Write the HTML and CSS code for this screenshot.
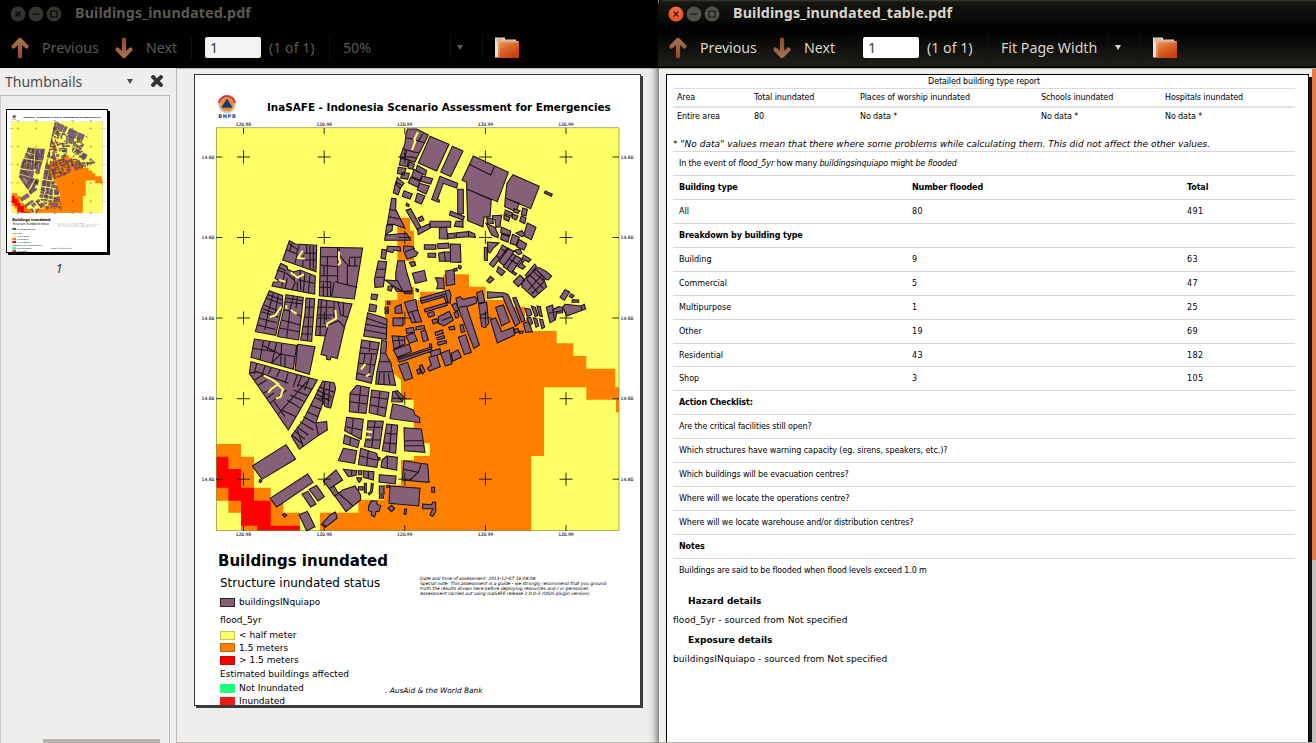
FILE: index.html
```html
<!DOCTYPE html>
<html lang="en">
<head>
<meta charset="utf-8">
<title>Buildings_inundated_table.pdf</title>
<link rel="stylesheet" href="styles.css">
</head>
<body>
<svg class="defs" width="0" height="0" aria-hidden="true">
  <defs>
    <linearGradient id="arrowFill" x1="0" y1="0" x2="0" y2="1"><stop offset="0" stop-color="#a3714f"/><stop offset="1" stop-color="#96492b"/></linearGradient>
    <linearGradient id="folderFill" x1="0" y1="0" x2=".6" y2="1"><stop offset="0" stop-color="#e6a566"/><stop offset=".5" stop-color="#d9682a"/><stop offset="1" stop-color="#cc3d0e"/></linearGradient>
    <symbol id="arrow" viewBox="0 0 18 22"><path d="M9 3V19.500M2.500 9.500 9 3 15.500 9.500" fill="none" stroke="url(#arrowFill)" stroke-width="4.200" stroke-linecap="round" stroke-linejoin="round"/></symbol>
    <symbol id="folder" viewBox="0 0 24 22"><path d="M0 0.500H10V2.500H21V20.500H0Z" fill="#e4e0dd"/><path d="M1.500 2.200H8.500M1.500 4H19" stroke="#d08868" stroke-width=".8"/><path d="M3 4H24V21H3Z" fill="url(#folderFill)"/><path d="M4 20V5H23" fill="none" stroke="#f0b488" stroke-width=".9"/></symbol>
    <symbol id="logo" viewBox="0 0 20 24">
      <circle cx="10" cy="9.500" r="8.800" fill="#cfc3c6"/><path d="M2 8A8.100 8.100 0 0 1 18 8" fill="none" stroke="#d33a3a" stroke-width="2.200"/>
      <circle cx="10" cy="9.700" r="6.600" fill="#f08a18"/><path d="M10 3.600 15.600 12.800H4.400Z" fill="#0c3b7c"/>
      <text x="1.200" y="23" textLength="17.600" font-family="DejaVu Sans" font-weight="bold" font-size="5" fill="#174a87">BNPB</text>
    </symbol>
    <symbol id="map" viewBox="200 119 435 420">
      <rect x="216.300" y="127.800" width="402.700" height="402.800" fill="#ffff66"/>
      <g transform="translate(370 270) scale(.33333)">
        <path fill="#ff8000" d="M45 90H82V50H132V90H150V65H220V13H297V50H347V90H425V110H465V150H485V183H560V220H610V258H649V296H736V352H747V427H738V389H649V352H522V558H484V782H-150V728H-35V690H42V645H93V570H132V558H180V520H131V390H93V330L70 310V290H57V260H45Z"/>
        <path fill="#ff8000" d="M82-157H120V-118H132V-28H82Z"/>
      </g>
      <g transform="translate(210 380) scale(.33333)">
        <path fill="#ff8000" d="M19 192H93V230H132V323H182V362H220V398H270V452H93V398H55V362H19Z"/>
        <path fill="#f00" d="M19 230H55V267H93V323H132V362H182V437H270V452H142V437H93V362H55V323H19Z"/>
      </g>
      <rect x="216.300" y="127.800" width="402.700" height="402.800" fill="none" stroke="#77772c" stroke-width=".6"/>
      <g stroke="#1c1c08" stroke-width=".9" fill="none">
        <path d="M243.500 128v6M324.200 128v6M404.800 128v6M485.400 128v6M566 128v6M243.500 531v-6M324.200 531v-6M404.800 531v-6M485.400 531v-6M566 531v-6"/>
        <path d="M216 157h6.500M216 237.500h6.500M216 318h6.500M216 398.700h6.500M216 479.200h6.500M619 157h-6.500M619 237.500h-6.500M619 318h-6.500M619 398.700h-6.500M619 479.200h-6.500"/>
      </g>
      <g class="bld" transform="translate(380 120) scale(.33333)">
        <path d="M83 27L110 27 145 45 104 127 60 112 75 70 78 40ZM75 54L100 57M104 60L135 68M100 95L66 86M96 95L118 98M90 110L110 115M80 90L74 115M128 42l-14 24"/>
        <path class="gap" d="M114 36L103 58 106 64 96 90"/>
        <path d="M150 49L207 73 170 153 115 129ZM217 79L249 93 212 170 182 156ZM280 108L385 157 352 245 260 207 260 187 246 181ZM260 207L334 239 330 291 312 291 309 321 263 302ZM399 164L478 199 452 266 376 234 381 190ZM376 234L418 250 408 275 374 260ZM496 213L517 223 514 229 493 219Z"/>
        <path class="line" d="M268 133L332 165 344 139"/>
        <path d="M180 169L233 190 230 204 190 190 172 238 179 241 177 247 155 238ZM233 208h17v73h-17ZM212 273L253 290 249 300 208 285ZM228 304L249 303 249 322 223 319ZM150 304h62v18h-62ZM112 327L147 312 152 323 115 344ZM78 271L92 266 122 320 112 330ZM114 294L126 288 132 299 120 305ZM80 250l8 4-2 6-8-3Z"/>
        <path d="M62 115L85 120 82 140 58 135ZM88 125L103 133 98 148 84 144ZM55 142L78 145 72 165 52 160ZM66 158L88 160 83 178 62 174ZM52 172L72 190 60 205 48 192ZM47 186L65 196 54 225 40 218ZM72 212L97 222 90 237 67 229ZM112 136L140 152 136 166 108 152ZM102 148L128 162 120 180 95 170ZM92 172L120 184 113 202 85 188ZM126 168L158 176 152 192 122 184ZM118 190L148 198 138 222 112 210ZM112 220L135 228 124 252 105 244Z"/>
        <path d="M35 235L48 236 47 268 75 325 40 313 22 312ZM20 315L38 315 36 332 24 338 18 345 80 340 92 361 14 361ZM22 379L60 380 62 393 42 390 38 398 20 393ZM6 388L20 390 16 418 3 414ZM72 377L100 380 102 390 114 398 108 408 82 417 70 392ZM88 427L104 425 107 436 95 440Z"/>
        <path class="line" d="M28 268L47 272M26 290L58 297M75 395L105 385M47 460L80 456"/>
        <path d="M53 422L73 422 80 456 97 512 50 514 37 494 47 483 47 460ZM97 460L133 451 140 482 106 490ZM108 506l8 3-2 7-6-3zM74 516h22v5h-22z"/>
        <path d="M133 374H168V388H133ZM173 371L206 369 207 384 174 386ZM144 400h23v12h-23ZM211 372L241 373 243 427 211 426ZM176 400L192 396 197 424 178 424ZM192 396h19v28h-14ZM178 324L200 321 203 357 178 356ZM203 341L225 339 225 354 203 355ZM229 338L265 335 266 350 229 353ZM265 334L284 342 286 352 266 350ZM236 436l8 3-2 8-7-3zM222 446l8-2 2 8-9 2zM197 453L222 449 224 493 199 497ZM166 473L190 474 193 506 170 506 174 492ZM320 483L331 469 342 478 329 489Z"/>
        <path d="M337 287L365 286 362 303 360 320 348 322 345 300 338 296ZM320 293l18 4 2 14-18-3zM318 310L345 322 355 345 354 353 335 345ZM322 366L357 369 340 384 330 399 324 395ZM313 382L322 384 322 422 313 420ZM376 270l22 9-4 10-20-8zM372 284l18 8-4 12-14-6zM402 266l18 6-6 8-12-4zM398 282l16 6-6 12-12-6zM428 264L442 268 438 288 424 284ZM424 288L438 294 434 311 419 304ZM442 309L468 322 454 359 432 348 434 335ZM408 339L426 332 434 345 426 350ZM364 321L392 333 390 347 362 338ZM365 342L388 350 384 367 362 358ZM398 343L418 352 408 376 390 370ZM416 358L440 372 432 390 410 380Z"/>
        <path d="M367 375L382 384 340 442 328 432 352 404ZM385 385L402 395 372 437 357 425ZM398 402L425 416 395 458 370 440ZM355 440L375 455 365 467 350 455ZM402 392l18-6 6 14-10 4zM430 405L453 418 446 426 434 420 426 432 436 440 428 447 413 440 425 425zM436 466L464 432 470 440 442 474ZM398 453l12 8-4 5-10-7zM430 480L475 442 500 455 515 468 505 480 490 475 500 500 462 533 425 500zM400 485L420 465 435 480 415 500Z"/>
        <path class="line" d="M408 407L380 447M388 418l25 15M365 388l14 8M350 408l10 8M450 465L490 505M470 450L500 480M440 478L475 520M445 510l40-45M455 522l40-40M460 454l30 28"/>
        <path d="M540 532L555 509 569 516 553 541ZM573 521l9 6-6 7-8-5zM577 539l19 1v7h-20zM499 562L518 555 520 568 536 560 548 562 548 578 530 580 526 600 510 608ZM548 562L555 553 603 558 613 553 617 567 560 588Z"/>
        <path class="line" d="M505 580L546 572M518 568L524 600M603 558L606 571"/>
      </g>
      <g class="bld" transform="translate(370 270) scale(.33333)">
        <path d="M352 65L403 69 415 75 450 158 436 169 398 80 352 85ZM428 84L438 82 465 152 455 156ZM377 112L400 105 419 155 395 168ZM361 149L377 144 395 185 430 172 434 195 382 219ZM258 85L270 80 279 88 315 80 322 88 318 100 290 110 328 225 312 235 263 110ZM320 68L337 62 344 95 326 100ZM326 102L350 97 356 160 345 173 335 170Z"/>
        <path class="line" d="M332 135L352 128M268 112L290 108"/>
        <path d="M265 202L287 194 304 247 283 254ZM212 250L238 240 246 282 226 288ZM244 250L264 240 274 262 248 274ZM172 295L184 285 176 262 200 254 211 290 178 303ZM86 286L113 277 128 324 104 332ZM148 287l8-3 9 20-8 8zM140 300l8-4 4 13-8 4z"/>
        <path d="M70 240L118 222 124 245 82 262ZM82 265L180 232 188 242 88 277ZM182 244L210 236 212 252 184 260ZM66 197L104 200 105 222 72 237ZM108 198L132 188 142 212 118 220ZM108 176l22-4 4 14-24 4zM152 185L166 180 175 210 160 215ZM138 170l24-4 2 10-26 4zM178 222l6 0 2 10-7 1z"/>
        <path class="line" d="M85 198L90 230M68 212L104 210M84 269L185 236"/>
        <path d="M103 97L137 88 144 123 155 155 125 158ZM75 112L93 103 97 130 75 130ZM69 144h30v23h-30ZM150 85L238 60 243 75 240 100 228 96 222 80 155 100ZM163 118L230 98 232 106 165 126ZM172 130l18-6 4 12-18 6zM205 140L238 124 250 150 222 168 205 160ZM186 150l14-4 5 10-15 6zM245 105l12-6 10 20-10 6zM252 128l10-4 5 16-10 5zM270 165l8-2 6 22-10 3zM195 187l22-7 3 10-23 7zM200 203l22-7 2 8-22 6zM202 217l26-6 2 8-25 7zM236 172l16-4 3 10-16 2z"/>
        <path class="line" d="M112 128L144 120M125 124L138 157M152 94L228 72M215 152L244 140M226 64L234 98"/>
        <path d="M52 95h8v8h-8zM45 112h10v8h-10zM45 124h10v6h-10zM465 115l16 3 5 16-14 6zM484 108l12 4 8 24-8 4zM501 108l10 2 6 30-8-2zM470 145l12-3 6 18-8 4zM490 143l10 3 6 22-8 4zM508 147l10 2 6 22-8 5zM460 160l15-5 12 30-20 2zM432 178l12-2 2 10-10 3zM448 184h12l-2 6h-10z"/>
      </g>
      <g class="bld" transform="translate(210 230) scale(.33333)">
        <path d="M238 32L256 42 320 46 318 125 218 90Z"/>
        <path class="line" d="M230 60L262 72M245 40L240 62M262 72L255 100M280 75L278 110M300 48V120M282 70H318M278 90H318M268 45l-8 25M290 46V70M310 48V120M236 40L262 58"/>
        <path class="gap" d="M278 62L264 84 284 86"/>
        <path d="M332 52L458 54 433 207 328 197Z"/>
        <path class="line" d="M332 80H383M383 52V160M388 55V75L415 108H445M352 80V197M332 105L380 110M330 137H383M332 155H362M362 155V197M340 160V197M372 157L365 200M375 155L412 165 442 172M412 108V165M418 85V108M418 82H453M435 85V110M330 172H362M342 105V137"/>
        <path class="gap" d="M387 64V85L391 98 384 106"/>
        <path d="M212 100L232 110 232 118 250 126 270 120 316 138 314 192 186 168 190 156 210 155 195 145Z"/>
        <path class="line" d="M200 120L230 130 252 150M225 125L215 170M250 126L255 160 245 180M285 130L280 185M265 150L312 160M300 135L295 190M232 145L225 175M262 155V183M205 112L228 122M270 122L272 180"/>
        <path class="gap" d="M242 127L262 143 282 133M207 150L226 155"/>
        <path d="M178 182L218 197 218 225 197 316 136 305 155 235Z"/>
        <path class="line" d="M170 205L215 222M163 225L210 245M155 245L205 262M148 265L200 278M142 285L195 298M190 190L175 245 165 300M205 195L195 250M174 194L216 210M159 236L190 248"/>
        <path class="gap" d="M214 230L196 256 180 261"/>
        <path d="M228 194L280 202 266 330 202 320 222 235Z"/>
        <path class="line" d="M250 198L240 240 230 322M225 215L278 222M222 240L250 245 275 262M215 270L272 285M210 295L268 305M262 200L258 235M226 204L279 212"/>
        <path class="gap" d="M242 240L260 252M229 226V236"/>
        <path d="M288 204L314 206 305 334 272 330 285 250Z"/>
        <path class="line" d="M300 205L292 330M285 232H312M282 262H310M278 290H308M275 312H305"/>
        <path d="M326 208L426 222 404 290 382 386 364 380 360 390 350 388 350 378 333 373 346 318 316 316Z"/>
        <path class="line" d="M350 212L348 270M372 212V262M322 232H372M320 255H370M318 290H350M384 215L392 255 415 262M400 218V255M346 318L355 285 385 272 398 285 404 295M334 210L330 315"/>
        <path class="gap" d="M376 240L379 265 352 281V292"/>
        <path d="M133 327L260 346 250 418 123 382ZM263 343L315 350 298 433 255 420Z"/>
        <path class="line" d="M160 332L150 390M200 338L185 400M155 345L215 375M128 355L195 365M215 342L212 405M212 372L255 380M185 400L215 368M225 378V412M180 335L172 360"/>
        <path d="M123 395L322 450 235 600 118 430Z"/>
        <path class="line" d="M140 402l-8 30M165 408L155 440M185 412L175 432M210 420L200 440M235 427L225 460M262 434L250 470M118 430L140 425 235 460M145 465L170 450M160 490L190 475M180 520L230 480M205 552L290 455M250 480L295 498M240 495L285 515M232 510L272 535M215 540L258 560M192 515L225 560M275 438L262 470M298 445l-15 35M135 450l20-14M170 505l22-16M262 464l44 14"/>
        <path class="gap" d="M162 437L185 448 205 462 184 477 174 488M204 464L219 478 212 500 198 506"/>
        <path d="M505 93L530 95 520 170 495 172 493 150ZM485 192L503 194 500 210 483 207ZM480 222L500 226 497 246 476 243ZM473 248L518 262 531 268 529 328 461 318ZM525 150L562 152 580 186 545 165ZM535 168h14l-6 16-10-4z"/>
        <path class="line" d="M500 118H527M497 142H523M470 265L530 285M467 283L530 295M465 300L528 312"/>
        <path d="M455 330L508 338 484 460 438 448ZM515 330L530 335 527 370 543 400 557 466 497 462 500 430 510 385Z"/>
        <path class="line" d="M480 332L478 365M450 352L505 360M447 370L500 372M445 400L495 405M485 372L478 430M440 430L485 440M510 370h18M505 395h35M502 425H548M510 428L505 462M522 428V463M535 430L540 463M465 372L460 402"/>
        <path class="gap" d="M466 402L453 418M480 432L468 439"/>
        <path d="M440 466L478 473 468 550 418 545 420 490ZM485 480L537 487 525 560 477 548ZM548 485L562 482 580 500 578 516 545 515ZM548 522L580 528 610 540 615 555 628 562 630 578 540 566Z"/>
        <path class="line" d="M452 470L445 545M422 492L475 498M420 515L470 522M510 484L502 554M483 500L534 508M480 525L530 535M548 505L578 505M555 484L575 512"/>
      </g>
      <g class="bld" transform="translate(210 380) scale(.33333)">
        <path d="M338 3L372 8 377 25 362 84 345 80 340 65 318 128 350 125 352 150 320 170 268 208 244 168 280 120 310 60Z"/>
        <path class="line" d="M320 30L365 50M318 42L360 62M315 52L345 70M345 5L335 60M300 75L335 88M290 95L325 110M280 110L315 130M270 125L310 150M260 140L295 165M252 152L285 178M246 165L275 190M318 130L325 165M262 150L280 200M360 8l-6 70M326 20L372 36M345 30l-8 36"/>
        <path d="M410 112L460 118 453 178 404 152ZM404 165L448 182 443 203 400 190ZM474 122L520 124 508 207 463 200 470 165ZM530 132L563 136 557 220 517 212Z"/>
        <path class="line" d="M430 115L425 162M422 172l-3 22M408 140L455 150M495 124L485 204M472 142H516M468 180H512M545 134L538 214M528 160L560 163M522 188L558 192"/>
        <path class="gap" d="M468 154L486 157M466 172H482"/>
        <path d="M400 205L440 212 434 250 385 242ZM452 205L500 220 505 240 500 262 445 254ZM530 228L562 232 560 270 513 262 516 240ZM582 143L634 147 645 217 584 212ZM582 242L630 250 653 253 657 307 577 300ZM505 232l6 2-2 6-6-2z"/>
        <path class="line" d="M475 212L470 258M450 228L500 240M532 230V265M582 182H638M584 197H643M580 268L625 277 634 251M600 300L625 277"/>
        <path d="M400 268L440 272 438 286 415 290ZM460 272L492 275 490 300 460 292ZM508 284L558 288 556 312 507 306ZM445 272h10v12h-10zM440 293h14v6l-6 8-4-4zM445 320h14v10h-14zM463 310h6v28h-6zM484 310L490 312 487 335 478 345 474 340 482 334ZM508 318h14v25h-14zM508 347h12v8h-12zM540 318L630 325 626 378 537 370ZM530 316h10v6h-10z"/>
        <path class="line" d="M425 270v16M475 274v22"/>
        <path d="M665 322h9v15h-9zM638 372L665 374 668 366 677 367 677 395 668 409 660 405 668 386 638 386ZM584 387h6l-2 16-6-1zM534 384L545 376 554 386 544 395ZM484 362L500 364 502 374 512 376 508 393 498 395 494 410 484 406 484 394 475 392 476 378Z"/>
        <path d="M127 258L228 194 257 237 156 298ZM150 298l6 5-5 5-4-3zM180 355L293 282 309 307 200 381ZM276 342L294 334 318 372 302 381ZM298 328L320 316 343 350 324 363ZM340 303L378 270 398 300 358 326ZM358 326L372 318 385 340 373 348ZM375 348L398 330 435 318 452 345 452 360 408 395ZM217 404L223 400 230 406 224 411ZM267 404L292 394 315 440 290 452ZM334 434L360 405 376 396 382 414 346 442Z"/>
        <path class="line" d="M388 342L428 377M336 430L350 440"/>
      </g>
      <path stroke="#15100c" stroke-width=".9" fill="none" d="M237 157h13M243.500 150.500v13M317.700 157h13M324.200 150.500v13M398.300 157h13M404.800 150.500v13M479 157h13M485.400 150.500v13M559.500 157h13M566 150.500v13M237 237.500h13M243.500 231v13M317.700 237.500h13M324.200 231v13M398.300 237.500h13M404.800 231v13M479 237.500h13M485.400 231v13M559.500 237.500h13M566 231v13M237 318h13M243.500 311.500v13M317.700 318h13M324.200 311.500v13M398.300 318h13M404.800 311.500v13M479 318h13M485.400 311.500v13M559.500 318h13M566 311.500v13M237 398.700h13M243.500 392.200v13M317.700 398.700h13M324.200 392.200v13M398.300 398.700h13M404.800 392.200v13M479 398.700h13M485.400 392.200v13M559.500 398.700h13M566 392.200v13M237 479.200h13M243.500 472.700v13M317.700 479.200h13M324.200 472.700v13M398.300 479.200h13M404.800 472.700v13M479 479.200h13M485.400 472.700v13M559.500 479.200h13M566 472.700v13"/>
      <g class="ticks" text-anchor="middle">
        <text x="243.500" y="125.700" textLength="15.500">120.98</text><text x="324.200" y="125.700" textLength="15.500">120.98</text><text x="404.800" y="125.700" textLength="15.500">120.99</text><text x="485.400" y="125.700" textLength="15.500">120.99</text><text x="566" y="125.700" textLength="15.500">120.99</text>
        <text x="243.500" y="536.300" textLength="15.500">120.98</text><text x="324.200" y="536.300" textLength="15.500">120.98</text><text x="404.800" y="536.300" textLength="15.500">120.99</text><text x="485.400" y="536.300" textLength="15.500">120.99</text><text x="566" y="536.300" textLength="15.500">120.99</text>
        <text x="208" y="158.700" textLength="12.800">14.60</text><text x="208" y="239.200" textLength="12.800">14.60</text><text x="208" y="319.800" textLength="12.800">14.60</text><text x="208" y="400.400" textLength="12.800">14.60</text><text x="208" y="480.900" textLength="12.800">14.60</text>
        <text x="627" y="158.700" textLength="12.800">14.60</text><text x="627" y="239.200" textLength="12.800">14.60</text><text x="627" y="319.800" textLength="12.800">14.60</text><text x="627" y="400.400" textLength="12.800">14.60</text><text x="627" y="480.900" textLength="12.800">14.60</text>
      </g>
    </symbol>
  </defs>
</svg>

<div class="desktop">
  <section class="window back">
    <header class="chrome">
      <div class="titlebar">
        <div class="controls">
          <svg class="ctl" viewBox="0 0 16 16"><circle cx="8" cy="8" r="7.500" fill="#34332f"/><path d="M5.500 5.500l5 5M10.500 5.500l-5 5" stroke="#050505" stroke-width="1.400"/></svg>
          <svg class="ctl" viewBox="0 0 16 16"><circle cx="8" cy="8" r="7.500" fill="#34332f"/><path d="M4.500 8h7" stroke="#050505" stroke-width="1.200"/></svg>
          <svg class="ctl" viewBox="0 0 16 16"><circle cx="8" cy="8" r="7.500" fill="#34332f"/><path d="M5 5h6v6H5z" fill="none" stroke="#050505" stroke-width="1.200"/></svg>
        </div>
        <h1 class="title">Buildings_inundated.pdf</h1>
      </div>
      <div class="toolbar">
        <svg class="arrow"><use href="#arrow"/></svg><span class="prev">Previous</span>
        <svg class="arrow down"><use href="#arrow"/></svg><span class="next">Next</span>
        <i class="sep"></i><span class="entry">1</span><span class="count">(1 of 1)</span><i class="sep"></i>
        <span class="zoom">50%</span><i class="sep"></i><i class="caret"></i><i class="sep wide"></i>
        <svg class="folder"><use href="#folder"/></svg>
      </div>
    </header>
    <div class="body">
      <aside class="side">
        <div class="sidehead"><span class="sidename">Thumbnails</span><i class="caret dark"></i>
          <svg class="close" viewBox="0 0 12 12"><path d="M2.200 2.200l7.600 7.600M9.800 2.200l-7.600 7.600" stroke="#343434" stroke-width="4" stroke-linecap="square"/></svg></div>
        <div class="pane">
          <div class="thumb"><div class="sheet mini">
            <div class="head"><svg class="logo"><use href="#logo"/></svg><span class="sheettitle">InaSAFE - Indonesia Scenario Assessment for Emergencies</span></div>
            <svg class="map"><use href="#map"/></svg>
            <div class="foot">
              <div class="legend">
                <div class="t1">Buildings inundated</div><div class="t2">Structure inundated status</div>
                <div class="item first"><i class="sw b"></i>buildingsINquiapo</div><div class="grp">flood_5yr</div>
                <div class="item"><i class="sw y"></i>&lt; half meter</div><div class="item"><i class="sw o"></i>1.5 meters</div><div class="item"><i class="sw r"></i>&gt; 1.5 meters</div>
                <div class="grp two">Estimated buildings affected</div>
                <div class="item g1"><i class="sw g"></i>Not Inundated</div><div class="item"><i class="sw r2"></i>Inundated</div>
              </div>
              <div class="notes"><p class="disc">Date and time of assessment: 2013-12-07 16:08:08<br>Special note: This assessment is a guide - we strongly recommend that you ground<br>truth the results shown here before deploying resources and / or personnel.<br>Assessment carried out using InaSAFE release 2.0.0-3 (QGIS plugin version).</p><p class="credit">. AusAid &amp; the World Bank</p></div>
            </div>
          </div></div>
          <div class="num">1</div>
          <div class="hscroll"></div>
        </div>
      </aside>
      <main class="view">
        <article class="sheet">
          <div class="head"><svg class="logo"><use href="#logo"/></svg><span class="sheettitle">InaSAFE - Indonesia Scenario Assessment for Emergencies</span></div>
          <svg class="map"><use href="#map"/></svg>
          <div class="foot">
            <div class="legend">
              <div class="t1">Buildings inundated</div><div class="t2">Structure inundated status</div>
              <div class="item first"><i class="sw b"></i>buildingsINquiapo</div><div class="grp">flood_5yr</div>
              <div class="item"><i class="sw y"></i>&lt; half meter</div><div class="item"><i class="sw o"></i>1.5 meters</div><div class="item"><i class="sw r"></i>&gt; 1.5 meters</div>
              <div class="grp two">Estimated buildings affected</div>
              <div class="item g1"><i class="sw g"></i>Not Inundated</div><div class="item"><i class="sw r2"></i>Inundated</div>
            </div>
            <div class="notes"><p class="disc">Date and time of assessment: 2013-12-07 16:08:08<br>Special note: This assessment is a guide - we strongly recommend that you ground<br>truth the results shown here before deploying resources and / or personnel.<br>Assessment carried out using InaSAFE release 2.0.0-3 (QGIS plugin version).</p><p class="credit">. AusAid &amp; the World Bank</p></div>
          </div>
        </article>
      </main>
    </div>
  </section>

  <section class="window front">
    <header class="chrome">
      <div class="titlebar">
        <div class="controls">
          <svg class="ctl" viewBox="0 0 16 16"><circle cx="8" cy="8" r="7.500" fill="#e9592b"/><circle cx="8" cy="6" r="5" fill="#f08058" opacity=".5"/><path d="M5.500 5.500l5 5M10.500 5.500l-5 5" stroke="#3b1408" stroke-width="1.300"/></svg>
          <svg class="ctl" viewBox="0 0 16 16"><circle cx="8" cy="8" r="7.500" fill="#51504b"/><path d="M4.500 8h7" stroke="#161613" stroke-width="1.200"/></svg>
          <svg class="ctl" viewBox="0 0 16 16"><circle cx="8" cy="8" r="7.500" fill="#51504b"/><path d="M5 5h6v6H5z" fill="none" stroke="#161613" stroke-width="1.200"/></svg>
        </div>
        <h1 class="title">Buildings_inundated_table.pdf</h1>
      </div>
      <div class="toolbar">
        <svg class="arrow"><use href="#arrow"/></svg><span class="prev">Previous</span>
        <svg class="arrow down"><use href="#arrow"/></svg><span class="next">Next</span>
        <i class="sep"></i><span class="entry">1</span><span class="count">(1 of 1)</span><i class="sep"></i>
        <span class="zoom">Fit Page Width</span><i class="sep"></i><i class="caret"></i><i class="sep wide"></i>
        <svg class="folder"><use href="#folder"/></svg>
      </div>
    </header>
    <div class="docview">
      <article class="report">
        <div class="caption">Detailed building type report</div>
        <div class="sum hd"><span>Area</span><span>Total inundated</span><span>Places of worship inundated</span><span>Schools inundated</span><span>Hospitals inundated</span></div>
        <div class="sum"><span>Entire area</span><span>80</span><span>No data *</span><span>No data *</span><span>No data *</span></div>
        <p class="warn">* "No data" values mean that there where some problems while calculating them. This did not affect the other values.</p>
        <div class="rows">
          <div class="row text"><span>In the event of <em>flood_5yr</em> how many <em>buildingsinquiapo</em> might <em>be flooded</em></span></div>
          <div class="row b"><span>Building type</span><span>Number flooded</span><span>Total</span></div>
          <div class="row"><span>All</span><span>80</span><span>491</span></div>
          <div class="row b"><span>Breakdown by building type</span></div>
          <div class="row"><span>Building</span><span>9</span><span>63</span></div>
          <div class="row"><span>Commercial</span><span>5</span><span>47</span></div>
          <div class="row"><span>Multipurpose</span><span>1</span><span>25</span></div>
          <div class="row"><span>Other</span><span>19</span><span>69</span></div>
          <div class="row"><span>Residential</span><span>43</span><span>182</span></div>
          <div class="row"><span>Shop</span><span>3</span><span>105</span></div>
          <div class="row b"><span>Action Checklist:</span></div>
          <div class="row text"><span>Are the critical facilities still open?</span></div>
          <div class="row text loose"><span>Which structures have warning capacity (eg. sirens, speakers, etc.)?</span></div>
          <div class="row text"><span>Which buildings will be evacuation centres?</span></div>
          <div class="row text"><span>Where will we locate the operations centre?</span></div>
          <div class="row text"><span>Where will we locate warehouse and/or distribution centres?</span></div>
          <div class="row b"><span>Notes</span></div>
          <div class="row text"><span>Buildings are said to be flooded when flood levels exceed 1.0 m</span></div>
        </div>
        <h2>Hazard details</h2>
        <p class="src">flood_5yr - sourced from Not specified</p>
        <h2>Exposure details</h2>
        <p class="src">buildingsINquiapo - sourced from Not specified</p>
      </article>
      <div class="vscroll"><div class="grip"></div></div>
    </div>
  </section>
</div>
</body>
</html>
```
FILE: styles.css
```css
* { box-sizing: border-box; }
body { margin: 0; width: 1316px; height: 743px; overflow: hidden; background: #000; font-family: "Noto Sans", "Open Sans", sans-serif; }
.defs { display: block; position: absolute; }
i { display: block; font-style: normal; }
p, h1, h2 { margin: 0; }
.desktop { display: flex; width: 1316px; height: 743px; }
.window { height: 743px; display: flex; flex-direction: column; }
.back { width: 658px; }
.front { width: 658px; z-index: 1; box-shadow: 0 2px 8px rgba(0,0,0,.75); border-left: 1px solid #8f8d86; }

/* window chrome */
.chrome { height: 68px; flex: none; background: #010101; color: #5b5955; }
.front .chrome { margin-left: -1px; background: linear-gradient(#3c3b37 0, #171613 2px, #0a0a09 20px, #000 27px, #050504 36px, #1f1e1a 66px, #000 67px); color: #d9d5cb; border-top-left-radius: 5px; }
.titlebar { height: 27px; display: flex; align-items: center; padding-left: 10px; }
.controls { display: flex; gap: 2px; }
.ctl { width: 16px; height: 16px; }
.title { margin: -2px 0 0 13px; font-size: 14.300px; line-height: 26px; font-weight: 700; letter-spacing: .12px; white-space: nowrap; }
.toolbar { height: 41px; display: flex; align-items: center; padding-left: 11px; font-size: 14.200px; white-space: nowrap; }
.arrow { width: 18px; height: 22px; flex: none; }
.down { transform: rotate(180deg); }
.prev { width: 73px; margin-left: 13px; }
.next { width: 45px; margin-left: 13px; }
.sep { width: 1px; height: 23px; background: #111; flex: none; }
.entry { width: 56px; height: 21px; margin-left: 13px; padding-left: 5px; background: #f4f3f1; color: #3c3c3c; border-radius: 2px; line-height: 21px; }
.front .entry { background: #fff; }
.count { width: 60px; margin-left: 8px; }
.zoom { width: 107px; margin-left: 13px; }
.caret { width: 0; height: 0; margin-left: 6px; border: 3.500px solid transparent; border-top: 5px solid currentColor; border-bottom: 0; }
.sep.wide { margin-left: 19px; }
.folder { width: 24px; height: 22px; margin-left: 12px; }

/* sidebar */
.body { flex: 1; display: flex; background: #efeeec; }
.side { width: 170px; padding-top: 1px; }
.sidehead { height: 26px; display: flex; align-items: center; padding: 0 0 2px 5px; color: #4c4c4c; font-size: 14px; }
.sidename { width: 116px; }
.caret.dark { color: #4a4a4a; }
.close { width: 12px; height: 12px; margin-left: 18px; }
.pane { height: 648px; border: 1px solid #bbb8b4; border-left-color: #c9c6c2; border-bottom: 0; padding: 13px 0 0 5px; display: flex; flex-direction: column; }
.thumb { width: 102px; height: 144px; border: 1px solid #000; box-shadow: 2px 2px 0 #000; background: #fff; overflow: hidden; }
.num { width: 106px; margin-top: 6px; text-align: center; font-size: 13px; font-style: italic; line-height: 18px; color: #3c3c3c; }
.hscroll { width: 117px; height: 4px; margin: auto 0 0 37px; background: #b8b5b1; }
.view { flex: 1; margin-left: 6px; border: 1px solid #bbb8b4; border-right: 0; padding: 5px 0 0 17px; }

/* map sheet */
.sheet { width: 447px; height: 632px; border: 1px solid #3a3a3a; background: #fff; box-shadow: 2px 2px 0 #3a3a3a; overflow: hidden; color: #000; font-family: "DejaVu Sans", sans-serif; white-space: nowrap; }
.mini { border: 0; box-shadow: none; transform: scale(.2255); transform-origin: 0 0; }
.head { height: 44px; display: flex; padding: 20px 0 0 22px; }
.logo { width: 20px; height: 24px; flex: none; }
.sheettitle { margin-left: 30px; font-weight: 700; font-size: 10.400px; line-height: 24px; }
.map { display: block; width: 435px; height: 420px; margin-left: 5px; flex: none; }
.foot { display: flex; padding-left: 25px; }
.legend { width: 165px; }
.t1 { margin-left: -2px; margin-top: 12px; font-weight: 700; font-size: 15px; line-height: 20px; }
.t2 { margin-top: 2px; font-size: 11.950px; line-height: 20px; }
.item { display: flex; align-items: center; gap: 4px; height: 12.700px; font-size: 9.050px; }
.item.first { margin-top: 3px; }
.sw { width: 15px; height: 9px; border: 1px solid; flex: none; }
.sw.b { background: #865f78; border-color: #2c2028; }
.sw.y { background: #ffff66; border-color: #c5c560; }
.sw.o { background: #ff8000; border-color: #b8660f; }
.sw.r { background: #f00; border-color: #c00; }
.sw.g { background: #1eff7c; border-color: #1eff7c; }
.sw.r2 { background: #f01818; border-color: #f01818; }
.grp { height: 20px; font-size: 9px; line-height: 22px; }
.grp.two { height: 15px; line-height: 15px; }
.g1 { height: 13.200px; }
.notes { display: flex; flex-direction: column; font-style: italic; }
.disc { margin: 37px 0 0 35px; font-size: 4.470px; line-height: 5.100px; }
.credit { margin-top: 89px; font-size: 7.400px; line-height: 12px; }
.ticks text { font: 4.600px "DejaVu Sans"; fill: #000; stroke: #000; stroke-width: .04; }
.bld path { fill: #865f78; stroke: #1a1116; stroke-width: 3.200; }
.bld .line { fill: none; }
.bld .gap { fill: none; stroke: #ffff66; stroke-width: 6; }

/* report */
.docview { flex: 1; display: flex; background: #efeeec; border-top: 1px solid #b4b2ad; border-bottom: 1px solid #b4b2ad; padding: 5px 0 0 7px; overflow: hidden; }
.report { width: 643px; height: 668px; flex: none; border: 1px solid #000; border-bottom: 0; background: #fff; box-shadow: 3px 3px 0 #141414; padding-left: 6px; font-family: "DejaVu Sans", sans-serif; font-size: 8px; color: #000; white-space: nowrap; }
.caption { width: 622px; height: 14px; line-height: 13px; text-align: center; letter-spacing: -.13px; border-bottom: 1px solid #dcdcdc; }
.sum { width: 622px; height: 18px; display: grid; grid-template-columns: 77px 106px 181px 124px auto; padding-left: 4px; line-height: 18px; letter-spacing: -.1px; }
.sum.hd { height: 19px; border-bottom: 2px solid #e2e2e2; }
.warn { margin-top: 11px; height: 14px; line-height: 15px; font-size: 9px; letter-spacing: .027px; font-style: italic; }
.rows { width: 622px; border-top: 1px solid #d6d6d6; }
.row { height: 23.940px; display: grid; grid-template-columns: 233px 275px auto; padding-left: 6px; line-height: 23px; border-bottom: 1px solid #d6d6d6; }
.row span + span { letter-spacing: .35px; }
.row.text { display: block; letter-spacing: -.128px; }
.row.loose { letter-spacing: -.075px; }
.row:last-child { border-bottom: 0; }
.row.b, .row.b span + span { font-weight: 700; letter-spacing: -.12px; }
h2 { font-size: 9px; line-height: 16px; margin: 10px 0 0 15px; }
.src { font-size: 9px; line-height: 16px; margin-top: 3px; letter-spacing: .07px; }
.src + h2 { margin-top: 4px; }
.vscroll { width: 4px; margin: -5px 0 0 3px; background: #c4c1bc; flex: none; }
.grip { height: 491px; background: #ec7a48; }
```
